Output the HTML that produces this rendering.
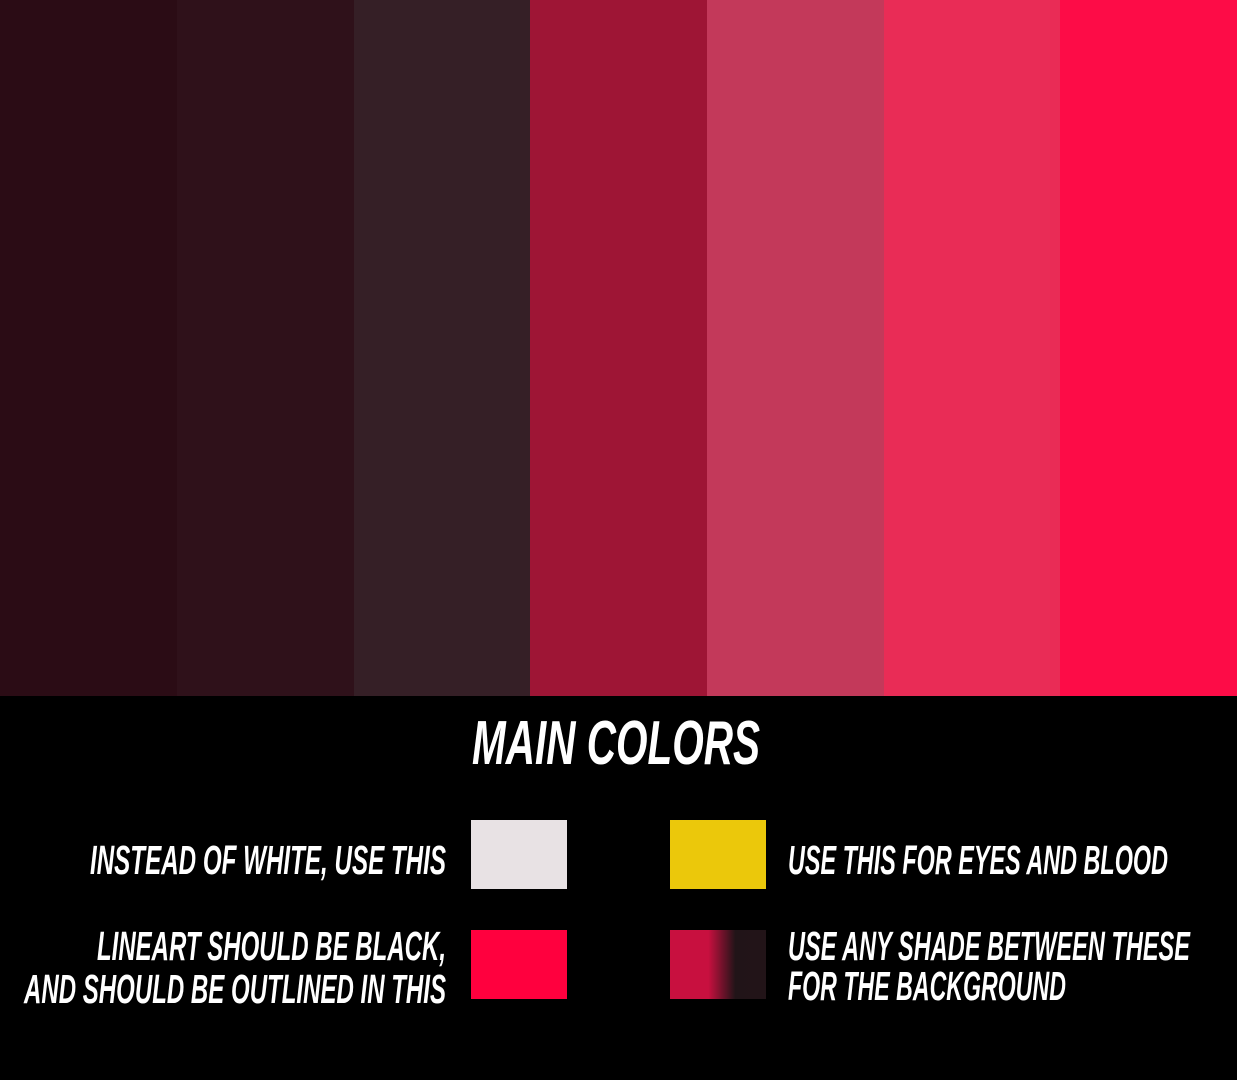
<!DOCTYPE html>
<html><head><meta charset="utf-8"><style>
html,body{margin:0;padding:0;background:#000;width:1237px;height:1080px;overflow:hidden}
svg{display:block}
text{font-family:"Liberation Sans Narrow","Liberation Sans",sans-serif;font-weight:bold;font-style:italic;fill:#fff}
</style></head><body>
<svg width="1237" height="1080" viewBox="0 0 1237 1080" xmlns="http://www.w3.org/2000/svg">
<defs><linearGradient id="g" x1="670" x2="766" gradientUnits="userSpaceOnUse">
<stop offset="0.4" stop-color="#c8103f"/><stop offset="0.68" stop-color="#211418"/><stop offset="1" stop-color="#221418"/></linearGradient></defs>
<rect x="0" y="0" width="1237" height="1080" fill="#000"/>
<rect x="0" y="0" width="177" height="696" fill="#2b0c15"/>
<rect x="177" y="0" width="177" height="696" fill="#2f111a"/>
<rect x="354" y="0" width="176" height="696" fill="#351f26"/>
<rect x="530" y="0" width="177" height="696" fill="#9e1535"/>
<rect x="707" y="0" width="177" height="696" fill="#c3395a"/>
<rect x="884" y="0" width="176" height="696" fill="#e92c56"/>
<rect x="1060" y="0" width="177" height="696" fill="#fd0c47"/>
<rect x="471" y="820" width="96" height="69" fill="#e8e2e4"/>
<rect x="670" y="820" width="96" height="69" fill="#ebc80b"/>
<rect x="471" y="930" width="96" height="69" fill="#ff003e"/>
<rect x="670" y="930" width="96" height="69" fill="url(#g)"/>
<text x="472" y="764" font-size="62" textLength="288" lengthAdjust="spacingAndGlyphs">MAIN COLORS</text>
<text x="90" y="874" font-size="41" textLength="356" lengthAdjust="spacingAndGlyphs">INSTEAD OF WHITE, USE THIS</text>
<text x="97" y="960" font-size="41" textLength="349" lengthAdjust="spacingAndGlyphs">LINEART SHOULD BE BLACK,</text>
<text x="24" y="1003" font-size="41" textLength="422" lengthAdjust="spacingAndGlyphs">AND SHOULD BE OUTLINED IN THIS</text>
<text x="788" y="874" font-size="41" textLength="380" lengthAdjust="spacingAndGlyphs">USE THIS FOR EYES AND BLOOD</text>
<text x="788" y="960" font-size="41" textLength="402" lengthAdjust="spacingAndGlyphs">USE ANY SHADE BETWEEN THESE</text>
<text x="788" y="1000" font-size="41" textLength="278" lengthAdjust="spacingAndGlyphs">FOR THE BACKGROUND</text>
</svg>
</body></html>
